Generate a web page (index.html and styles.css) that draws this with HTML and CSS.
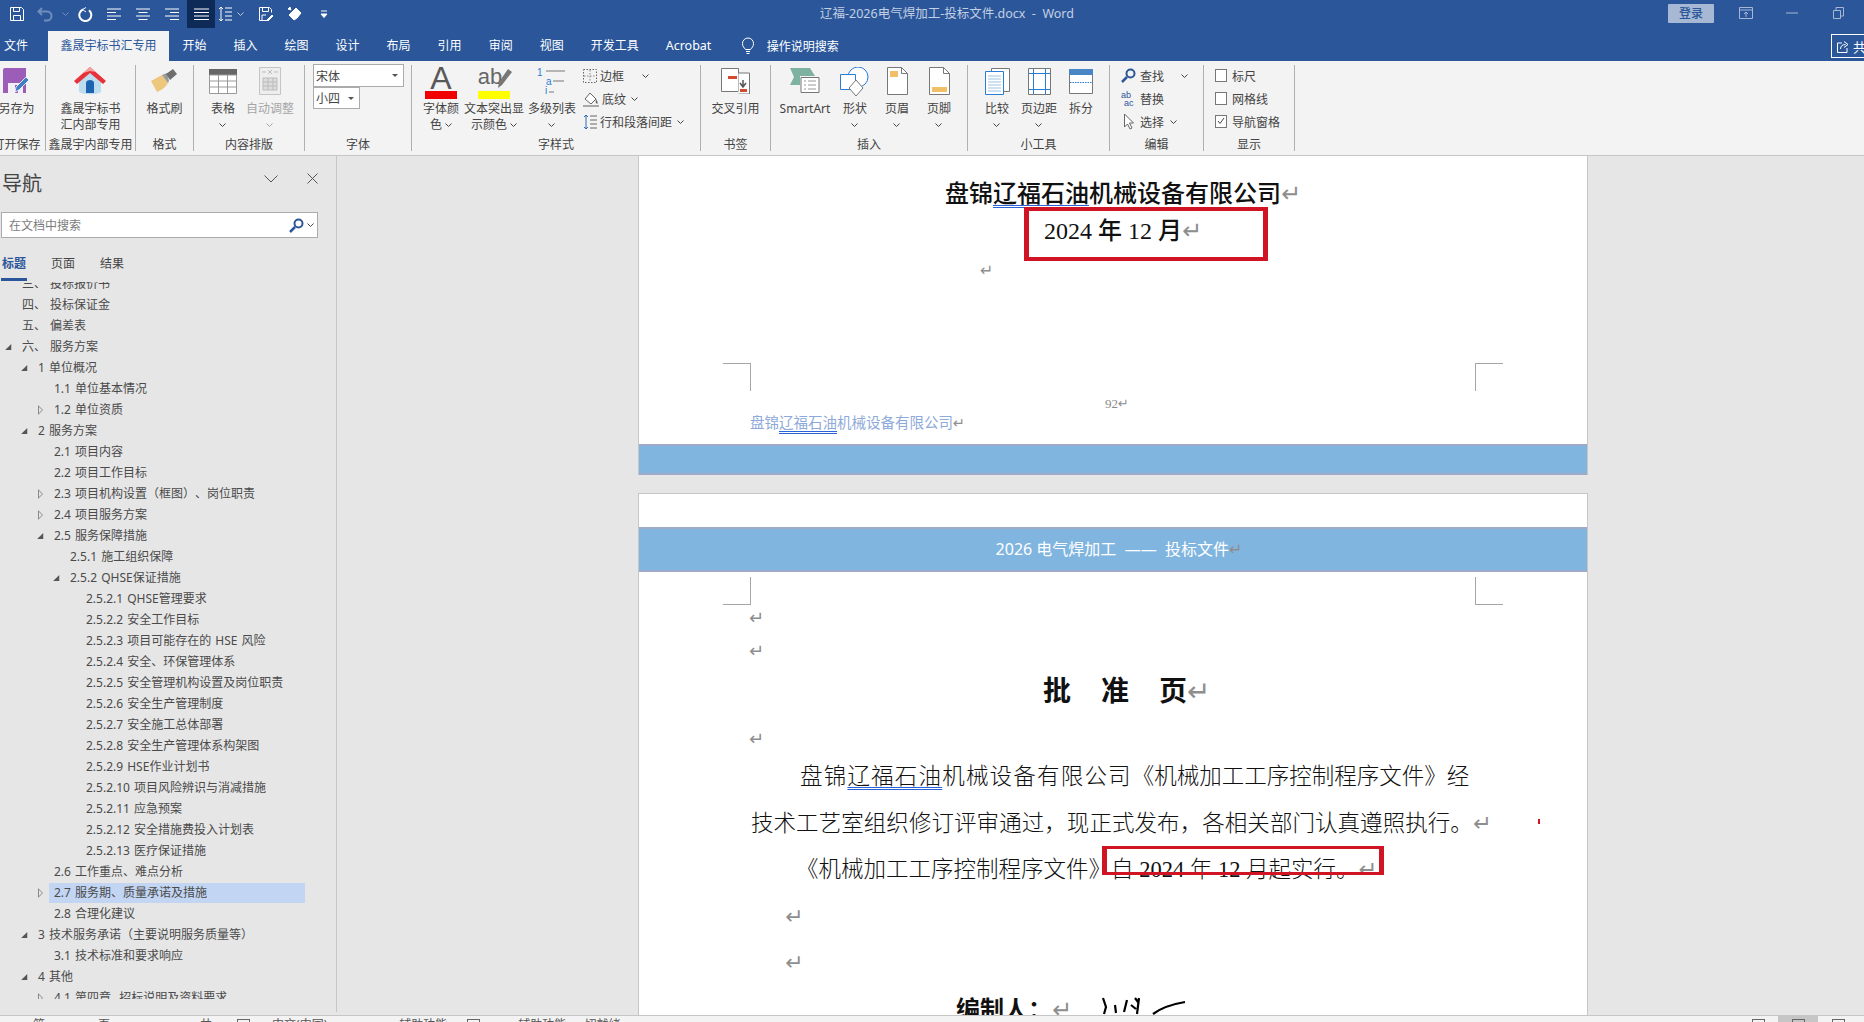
FILE: index.html
```html
<!DOCTYPE html>
<html lang="zh-CN">
<head>
<meta charset="utf-8">
<title>辽福-2026电气焊加工-投标文件.docx - Word</title>
<link rel="stylesheet" href="styles.css">
</head>
<body>
<div class="app">
  <header class="titlebar">
    <div class="qat">
      <span class="q"><svg width="16" height="16" viewBox="0 0 16 16" class="qi"><path d="M1.5 1.5h11l2 2v11h-13z"/><path d="M4.5 1.5v4h6v-4M4.5 14.5v-5h7v5"/></svg></span>
      <span class="q dim"><svg width="18" height="16" viewBox="0 0 18 16" class="qi"><path d="M5 2L1.5 5.5 5 9M2 5.5h8a4.5 4.5 0 0 1 0 9H7" stroke-width="2"/></svg></span>
      <span class="q-sm dim"><svg width="7" height="4" viewBox="0 0 7 4" class="qi"><path d="M.5.5l3 3 3-3"/></svg></span>
      <span class="q"><svg width="16" height="16" viewBox="0 0 16 16" class="qi"><path d="M9 1.5L5.5 3.5 9 6" /><path d="M6 3.5a6 6 0 1 0 6 .8" stroke-width="2"/></svg></span>
      <span class="q"><svg width="14" height="12" viewBox="0 0 14 12" class="qi"><path d="M0 1h14M0 4.500h9M0 8h14M0 11.500h9"/></svg></span>
      <span class="q"><svg width="14" height="12" viewBox="0 0 14 12" class="qi"><path d="M0 1h14M2.500 4.500h9M0 8h14M2.500 11.500h9"/></svg></span>
      <span class="q"><svg width="14" height="12" viewBox="0 0 14 12" class="qi"><path d="M0 1h14M5 4.500h9M0 8h14M5 11.500h9"/></svg></span>
      <span class="q active"><svg width="15" height="12" viewBox="0 0 15 12" class="qi"><path d="M0 1h15M0 4.500h15M0 8h15M0 11.500h15"/></svg></span>
      <span class="q-line"><svg width="14" height="16" viewBox="0 0 14 16" class="qi"><path d="M3 1v14M1 3l2-2 2 2M1 13l2 2 2-2M7 2h7M7 6h7M7 10h7M7 14h7"/></svg></span>
      <span class="q-sm2"><svg width="7" height="4" viewBox="0 0 7 4" class="qi"><path d="M.5.5l3 3 3-3" stroke="#b9c8de"/></svg></span>
      <span class="q q-gap"><svg width="16" height="16" viewBox="0 0 16 16" class="qi"><path d="M10 14.500H1.500v-13h10l2 2v3"/><path d="M4.500 1.500v4h6v-4M4 14v-5h4"/><path d="M9 14l5-5 1 1-5 5z" fill="#fff"/></svg></span>
      <span class="q"><svg width="16" height="16" viewBox="0 0 16 16" class="qi"><path d="M7 14L2 9l7-7 5 5-4 5z" fill="#fff"/><path d="M1 3l2-2 1 3z" fill="#fff"/></svg></span>
      <span class="q"><svg width="8" height="8" viewBox="0 0 8 8" class="qi"><path d="M1 1h6"/><path d="M1 4h6L4 7.500z" fill="#fff"/></svg></span>
    </div>
    <div class="doc-title">辽福-2026电气焊加工-投标文件.docx&nbsp; -&nbsp; Word</div>
    <div class="winctl">
      <span class="signin">登录</span>
      <span class="win"><svg width="14" height="12" viewBox="0 0 14 12" class="wi"><path d="M.5.500h13v11H.5zM.5 3h13M7 10V5M5 7l2-2 2 2"/></svg></span>
      <span class="win"><svg width="12" height="2" viewBox="0 0 12 2" class="wi"><path d="M0 1h12"/></svg></span>
      <span class="win"><svg width="11" height="12" viewBox="0 0 11 12" class="wi"><path d="M.5 3.500h7v8h-7zM3 3V.500h7.500V9H8"/></svg></span>
    </div>
  </header>

  <nav class="tabs">
    <span class="tab first">文件</span>
    <span class="tab active">鑫晟宇标书汇专用</span>
    <span class="tab">开始</span>
    <span class="tab">插入</span>
    <span class="tab">绘图</span>
    <span class="tab">设计</span>
    <span class="tab">布局</span>
    <span class="tab">引用</span>
    <span class="tab">审阅</span>
    <span class="tab">视图</span>
    <span class="tab">开发工具</span>
    <span class="tab latin">Acrobat</span>
    <span class="tell">
      <svg width="14" height="18" viewBox="0 0 14 18" class="wi-w"><path d="M4.500 12.500C3 10.500 1.500 9.500 1.500 6.500a5.500 5.500 0 0 1 11 0c0 3-1.500 4-3 6zM5 14.500h4M5.500 16.500h3"/></svg>
      <span>操作说明搜索</span>
    </span>
    <span class="share"><svg width="12" height="13" viewBox="0 0 12 13" class="wi-w"><path d="M5 3H.500v9.500H10V8M3.500 9c0-3 2-4.500 5-4.500M7 1.500l4 3-4 3"/></svg><span>共享</span></span>
  </nav>

  <section class="ribbon">
    <div class="grp g1">
      <div class="tools center">
        <div class="tool"><div class="ico"><svg width="26" height="26" viewBox="0 0 26 26"><path d="M0 2a2 2 0 0 1 2-2h21v25H0z" fill="#9c5db8"/><path d="M5 15h15v10H5z" fill="#f4eef8"/><path d="M12 17h3v8h-3z" fill="#9c5db8"/><path d="M12 24l1-5L23 9l3 3-10 10z" fill="#3f7fc4" stroke="#fff" stroke-width=".8"/></svg></div><div class="t">另存为</div></div>
      </div>
      <div class="lbl">打开保存</div>
    </div>
    <div class="grp g2">
      <div class="tools center">
        <div class="tool"><div class="ico"><svg width="32" height="30" viewBox="0 0 32 30"><path d="M5 14v12c4 3 18 3 22 0V14L16 4z" fill="#bcdcf0"/><path d="M12 27V17c0-4 8-4 8 0v10z" fill="#1e63b0"/><path d="M0 15L16 1l16 14-3 3L16 7 3 18z" fill="#e8323a"/><path d="M9 7l7-6 6 5-6-1z" fill="#f6a0a0"/></svg></div><div class="t">鑫晟宇标书<br>汇内部专用</div></div>
      </div>
      <div class="lbl">鑫晟宇内部专用</div>
    </div>
    <div class="grp g3">
      <div class="tools center">
        <div class="tool"><div class="ico"><svg width="26" height="24" viewBox="0 0 26 24"><path d="M0 12l6 11c5-2 9-5 11-9l-6-8z" fill="#ecc77c"/><path d="M11 6l5-2 2 8-1 2z" fill="#9a9a9a"/><path d="M15 5l7-5 4 5-7 6z" fill="#6e6e6e"/></svg></div><div class="t">格式刷</div></div>
      </div>
      <div class="lbl">格式</div>
    </div>
    <div class="grp g4">
      <div class="tools">
        <div class="tool w40"><div class="ico"><svg width="28" height="25" viewBox="0 0 28 25"><path d="M0 0h28v6H0z" fill="#666"/><path d="M.5 6h27v18.500H.5zM.5 12h27M.5 18h27M9.500 6v18M18.500 6v18" fill="#fff" stroke="#999"/></svg></div><div class="t">表格<br><svg class="chev" width="7" height="4" viewBox="0 0 7 4"><path d="M.5.500l3 3 3-3"/></svg></div></div>
        <div class="tool w54 off"><div class="ico"><svg width="22" height="28" viewBox="0 0 22 28"><path d="M.5.500h21v27H.5z" fill="#eee" stroke="#c4c4c4"/><path d="M3 5h4M15 5h4M9 3l4 4M13 3L9 7" stroke="#bbb" fill="none"/><path d="M4 11h14v12H4zM4 15h14M4 19h14M9 11v12M14 11v12" fill="#ddd" stroke="#bbb"/></svg></div><div class="t">自动调整<br><svg class="chev" width="7" height="4" viewBox="0 0 7 4"><path d="M.5.500l3 3 3-3"/></svg></div></div>
      </div>
      <div class="lbl">内容排版</div>
    </div>
    <div class="grp g5">
      <div class="tools col">
        <div class="select s-font"><span>宋体</span><i class="caret"></i></div>
        <div class="select s-size"><span>小四</span><i class="caret"></i></div>
      </div>
      <div class="lbl">字体</div>
    </div>
    <div class="grp g6">
      <div class="tools">
        <div class="tool w40"><div class="ico stack"><span class="big-a">A</span><i class="bar red"></i></div><div class="t">字体颜<br>色 <svg class="chev" width="7" height="4" viewBox="0 0 7 4"><path d="M.5.500l3 3 3-3"/></svg></div></div>
        <div class="tool w64"><div class="ico stack"><span class="big-ab">ab</span><svg class="ab-pen" width="14" height="20" viewBox="0 0 14 20"><path d="M0 20l1-6L10 1l4 3L4 17z" fill="#777"/></svg><i class="bar yellow"></i></div><div class="t">文本突出显<br>示颜色 <svg class="chev" width="7" height="4" viewBox="0 0 7 4"><path d="M.5.500l3 3 3-3"/></svg></div></div>
        <div class="tool w50"><div class="ico"><svg width="30" height="28" viewBox="0 0 30 28"><text x="0" y="9" class="ml-t">1</text><path d="M9 4h19M16 14h11M12 25h5" stroke="#777" fill="none"/><text x="9" y="18" class="ml-t">a</text><text x="8" y="27" class="ml-t">i</text></svg></div><div class="t">多级列表<br><svg class="chev" width="7" height="4" viewBox="0 0 7 4"><path d="M.5.500l3 3 3-3"/></svg></div></div>
        <div class="small-col">
          <div class="sr"><svg width="14" height="14" viewBox="0 0 14 14"><path d="M.5.500h13v13H.5z" fill="none" stroke="#666" stroke-dasharray="1.500 1.500"/><path d="M7 1v12M1 7h12" stroke="#888" stroke-dasharray="1.500 1.500"/></svg><span>边框</span><svg class="chev sr-c1" width="7" height="4" viewBox="0 0 7 4"><path d="M.5.500l3 3 3-3"/></svg></div>
          <div class="sr"><svg width="16" height="16" viewBox="0 0 16 16"><path d="M2 8l5-6 6 6-5 5z" fill="#fff" stroke="#666"/><path d="M13 8c2 3 2 4 1 5-1-1-2-2-1-5z" fill="#666"/><path d="M0 14h16v2H0z" fill="#a9a9a9"/></svg><span>底纹</span><svg class="chev" width="7" height="4" viewBox="0 0 7 4"><path d="M.5.500l3 3 3-3"/></svg></div>
          <div class="sr"><svg width="14" height="16" viewBox="0 0 14 16"><path d="M3 1v14M1 3l2-2 2 2M1 13l2 2 2-2" fill="none" stroke="#2b6cb0"/><path d="M7 2h7M7 6h7M7 10h7M7 14h7" stroke="#666"/></svg><span>行和段落间距</span><svg class="chev" width="7" height="4" viewBox="0 0 7 4"><path d="M.5.500l3 3 3-3"/></svg></div>
        </div>
      </div>
      <div class="lbl">字样式</div>
    </div>
    <div class="grp g7">
      <div class="tools center">
        <div class="tool"><div class="ico"><svg width="29" height="26" viewBox="0 0 29 26"><path d="M.5.500h17v23H.5z" fill="#fff" stroke="#777"/><path d="M17.500 5h11v21h-11" fill="#fff" stroke="#777"/><path d="M7 8h9v3H7z" fill="#d24b2e"/><path d="M19 21h7v3h-7z" fill="#d24b2e"/><path d="M22 12v6M19 15l3 4 3-4" fill="none" stroke="#555" stroke-width="1.500"/></svg></div><div class="t">交叉引用</div></div>
      </div>
      <div class="lbl">书签</div>
    </div>
    <div class="grp g8">
      <div class="tools">
        <div class="tool w54"><div class="ico"><svg width="30" height="26" viewBox="0 0 30 26"><path d="M0 0h20l5 8h-15v9H0l4-8z" fill="#7fb1a0"/><path d="M11 9.500h18v15H11z" fill="#fff" stroke="#777"/><path d="M14 13h2M18 13h8M14 17h2M18 17h8M14 21h2M18 21h8" stroke="#999"/></svg></div><div class="t latin">SmartArt</div></div>
        <div class="tool w42 mg2"><div class="ico"><svg width="30" height="29" viewBox="0 0 30 29"><circle cx="18" cy="10" r="10" fill="#fff" stroke="#2b7cd3"/><path d="M.5 7.500h15v15H.5z" fill="#fff" stroke="#2b7cd3"/><path d="M16 13l7 8-7 8-7-8z" fill="#fff" stroke="#777"/></svg></div><div class="t">形状<br><svg class="chev" width="7" height="4" viewBox="0 0 7 4"><path d="M.5.500l3 3 3-3"/></svg></div></div>
        <div class="tool w42"><div class="ico"><svg width="21" height="28" viewBox="0 0 21 28"><path d="M.5.500h14l6 6v21H.5z" fill="#fff" stroke="#777"/><path d="M14.500.500v6h6" fill="none" stroke="#777"/><path d="M3 4h8v6H3z" fill="#f0bf68"/></svg></div><div class="t">页眉<br><svg class="chev" width="7" height="4" viewBox="0 0 7 4"><path d="M.5.500l3 3 3-3"/></svg></div></div>
        <div class="tool w42"><div class="ico"><svg width="21" height="28" viewBox="0 0 21 28"><path d="M.5.500h14l6 6v21H.5z" fill="#fff" stroke="#777"/><path d="M14.500.500v6h6" fill="none" stroke="#777"/><path d="M3 20h15v5H3z" fill="#f0bf68"/></svg></div><div class="t">页脚<br><svg class="chev" width="7" height="4" viewBox="0 0 7 4"><path d="M.5.500l3 3 3-3"/></svg></div></div>
      </div>
      <div class="lbl">插入</div>
    </div>
    <div class="grp g9">
      <div class="tools">
        <div class="tool w40"><div class="ico"><svg width="25" height="27" viewBox="0 0 25 27"><path d="M6.500.500h18v23h-18z" fill="#fff" stroke="#777"/><path d="M.5 3.500h18v23H.5z" fill="#fff" stroke="#2b7cd3"/><path d="M3 8h13M3 11h13M3 14h13M3 17h13M3 20h13M3 23h13" stroke="#9cc3e6"/></svg></div><div class="t">比较<br><svg class="chev" width="7" height="4" viewBox="0 0 7 4"><path d="M.5.500l3 3 3-3"/></svg></div></div>
        <div class="tool w40"><div class="ico"><svg width="23" height="27" viewBox="0 0 23 27"><path d="M.5.500h22v26H.5z" fill="#fff" stroke="#777"/><path d="M5.500 1v25M17.500 1v25M1 5.500h21M1 21.500h21" stroke="#2b7cd3"/></svg></div><div class="t">页边距<br><svg class="chev" width="7" height="4" viewBox="0 0 7 4"><path d="M.5.500l3 3 3-3"/></svg></div></div>
        <div class="tool w40"><div class="ico"><svg width="24" height="25" viewBox="0 0 24 25"><path d="M.5.500h23v24H.5z" fill="#fff" stroke="#777"/><path d="M0 0h24v6H0z" fill="#4a86c5"/><path d="M1 13.500h22" stroke="#2b7cd3" stroke-dasharray="1.500 1"/></svg></div><div class="t">拆分</div></div>
      </div>
      <div class="lbl">小工具</div>
    </div>
    <div class="grp g10">
      <div class="tools col">
        <div class="sr edit"><svg width="15" height="15" viewBox="0 0 15 15"><circle cx="9.500" cy="5.500" r="4" fill="none" stroke="#2b579a" stroke-width="2"/><path d="M6 9l-5 5" stroke="#2b579a" stroke-width="2.500"/></svg><span>查找</span><svg class="chev sr-c2" width="7" height="4" viewBox="0 0 7 4"><path d="M.5.500l3 3 3-3"/></svg></div>
        <div class="sr edit"><svg width="15" height="17" viewBox="0 0 15 17"><text x="0" y="8" class="rep">ab</text><text x="3" y="16" class="rep">ac</text></svg><span>替换</span></div>
        <div class="sr edit"><svg width="15" height="17" viewBox="0 0 15 17"><path d="M3.500 1v13l3-3 2.500 5 2-1-2.500-5h4z" fill="#fff" stroke="#666"/></svg><span>选择</span><svg class="chev" width="7" height="4" viewBox="0 0 7 4"><path d="M.5.500l3 3 3-3"/></svg></div>
      </div>
      <div class="lbl">编辑</div>
    </div>
    <div class="grp g11">
      <div class="tools col">
        <label class="sr chk"><i class="cb"></i><span>标尺</span></label>
        <label class="sr chk"><i class="cb"></i><span>网格线</span></label>
        <label class="sr chk"><i class="cb"><svg width="10" height="10" viewBox="0 0 10 10"><path d="M2 5l2 2.500L8 2" fill="none" stroke="#444"/></svg></i><span>导航窗格</span></label>
      </div>
      <div class="lbl">显示</div>
    </div>
  </section>

  <main class="main">
    <aside class="nav">
      <div class="nav-head">
        <div class="nav-title">导航</div>
        <svg class="nav-chev" width="14" height="8" viewBox="0 0 14 8"><path d="M.5.500L7 7 13.500.500" fill="none" stroke="#555"/></svg>
        <svg class="nav-x" width="11" height="11" viewBox="0 0 11 11"><path d="M.5.500l10 10M10.500.500l-10 10" fill="none" stroke="#555"/></svg>
      </div>
      <div class="search"><span>在文档中搜索</span><svg width="15" height="15" viewBox="0 0 15 15"><circle cx="9.500" cy="5.500" r="4" fill="none" stroke="#2b579a" stroke-width="2"/><path d="M6 9l-5 5" stroke="#2b579a" stroke-width="2.500"/></svg><svg class="chev" width="7" height="4" viewBox="0 0 7 4"><path d="M.5.500l3 3 3-3"/></svg></div>
      <div class="nav-tabs"><span class="nt on">标题</span><span class="nt">页面</span><span class="nt">结果</span></div>
      <div class="tree">
        <div class="row l0 first-row"><i class="nc"></i><span class="rl">三、 投标报价书</span></div>
        <div class="row l0"><i class="nc"></i><span class="rl">四、 投标保证金</span></div>
        <div class="row l0"><i class="nc"></i><span class="rl">五、 偏差表</span></div>
        <div class="row l0"><i class="nc open"></i><span class="rl">六、 服务方案</span></div>
        <div class="row l1"><i class="nc open"></i><span class="rl">1 单位概况</span></div>
        <div class="row l2"><i class="nc"></i><span class="rl">1.1 单位基本情况</span></div>
        <div class="row l2"><i class="nc shut"></i><span class="rl">1.2 单位资质</span></div>
        <div class="row l1"><i class="nc open"></i><span class="rl">2 服务方案</span></div>
        <div class="row l2"><i class="nc"></i><span class="rl">2.1 项目内容</span></div>
        <div class="row l2"><i class="nc"></i><span class="rl">2.2 项目工作目标</span></div>
        <div class="row l2"><i class="nc shut"></i><span class="rl">2.3 项目机构设置（框图）、岗位职责</span></div>
        <div class="row l2"><i class="nc shut"></i><span class="rl">2.4 项目服务方案</span></div>
        <div class="row l2"><i class="nc open"></i><span class="rl">2.5 服务保障措施</span></div>
        <div class="row l3"><i class="nc"></i><span class="rl">2.5.1 施工组织保障</span></div>
        <div class="row l3"><i class="nc open"></i><span class="rl">2.5.2 QHSE保证措施</span></div>
        <div class="row l4"><i class="nc"></i><span class="rl">2.5.2.1 QHSE管理要求</span></div>
        <div class="row l4"><i class="nc"></i><span class="rl">2.5.2.2 安全工作目标</span></div>
        <div class="row l4"><i class="nc"></i><span class="rl">2.5.2.3 项目可能存在的 HSE 风险</span></div>
        <div class="row l4"><i class="nc"></i><span class="rl">2.5.2.4 安全、环保管理体系</span></div>
        <div class="row l4"><i class="nc"></i><span class="rl">2.5.2.5 安全管理机构设置及岗位职责</span></div>
        <div class="row l4"><i class="nc"></i><span class="rl">2.5.2.6 安全生产管理制度</span></div>
        <div class="row l4"><i class="nc"></i><span class="rl">2.5.2.7 安全施工总体部署</span></div>
        <div class="row l4"><i class="nc"></i><span class="rl">2.5.2.8 安全生产管理体系构架图</span></div>
        <div class="row l4"><i class="nc"></i><span class="rl">2.5.2.9 HSE作业计划书</span></div>
        <div class="row l4"><i class="nc"></i><span class="rl">2.5.2.10 项目风险辨识与消减措施</span></div>
        <div class="row l4"><i class="nc"></i><span class="rl">2.5.2.11 应急预案</span></div>
        <div class="row l4"><i class="nc"></i><span class="rl">2.5.2.12 安全措施费投入计划表</span></div>
        <div class="row l4"><i class="nc"></i><span class="rl">2.5.2.13 医疗保证措施</span></div>
        <div class="row l2"><i class="nc"></i><span class="rl">2.6 工作重点、难点分析</span></div>
        <div class="row l2 sel"><i class="nc shut"></i><span class="rl">2.7 服务期、质量承诺及措施</span></div>
        <div class="row l2"><i class="nc"></i><span class="rl">2.8 合理化建议</span></div>
        <div class="row l1"><i class="nc open"></i><span class="rl">3 技术服务承诺（主要说明服务质量等）</span></div>
        <div class="row l2"><i class="nc"></i><span class="rl">3.1 技术标准和要求响应</span></div>
        <div class="row l1"><i class="nc open"></i><span class="rl">4 其他</span></div>
        <div class="row l2"><i class="nc shut"></i><span class="rl">4.1 第四章&nbsp; 招标说明及资料要求</span></div>
      </div>
    </aside>

    <div class="doc">
      <article class="page p1">
        <div class="d-head">盘锦<u class="squig">辽福石油</u>机械设备有限公司<span class="rm">↵</span></div>
        <div class="d-date">2024 年 12 月<span class="rm">↵</span></div>
        <div class="d-mark1"><span class="rm">↵</span></div>
        <div class="crop-row"><i class="crop tl"></i><i class="crop tr"></i></div>
        <div class="d-num">92<span class="rm">↵</span></div>
        <div class="d-co">盘锦<u class="squig">辽福石油</u>机械设备有限公司<span class="rm">↵</span></div>
        <div class="band"></div>
        <i class="redbox rb1"></i>
      </article>
      <article class="page p2">
        <div class="band hd">2026 电气焊加工&nbsp; ——&nbsp; 投标文件<span class="rm">↵</span></div>
        <div class="crop-row"><i class="crop bl"></i><i class="crop br"></i></div>
        <div class="mk mk1"><span class="rm">↵</span></div>
        <div class="mk mk2"><span class="rm">↵</span></div>
        <div class="d-title">批<span class="sp"></span>准<span class="sp"></span>页<span class="rm">↵</span></div>
        <div class="mk mk3"><span class="rm">↵</span></div>
        <p class="ln ln1"><span class="wide">盘锦<u class="squig">辽福石油</u>机械设备有限公司</span>《机械加工工序控制程序文件》经</p>
        <p class="ln ln2">技术工艺室组织修订评审通过，现正式发布，各相关部门认真遵照执行。<span class="rm">↵</span></p>
        <p class="ln ln3">《机械加工工序控制程序文件》自 2024 年 12 月起实行。<span class="rm">↵</span></p>
        <div class="mk mk4"><span class="rm big">↵</span></div>
        <div class="mk mk5"><span class="rm big">↵</span></div>
        <div class="sign"><span class="sign-l">编制人：<span class="rm">↵</span></span><svg width="90" height="20" viewBox="0 0 90 20"><path d="M2 2l3 9-2 7M14 9l1 8M26 4l-3 12M34 2l3 4M30 9l5 4M38 2l-2 16M52 18c8-6 20-10 32-12" fill="none" stroke="#000" stroke-width="2.200"/></svg></div>
        <i class="redbox rb2"></i>
        <i class="tick"></i>
      </article>
    </div>
  </main>

  <footer class="status">
    <span class="st st-a">第</span><span class="st st-b">页</span><span class="st st-c">共</span>
    <i class="st-box"></i><span class="st st-d">中文(中国)</span><span class="st st-e">辅助功能</span><i class="st-box st-f"></i><span class="st st-g">辅助功能: 一切就绪</span>
    <span class="views"><span class="vb"><i class="vi"></i></span><span class="vb on"><i class="vi"></i></span><span class="vb"><i class="vi"></i></span></span>
  </footer>
</div>
</body>
</html>
```

FILE: styles.css
```css
* { box-sizing: border-box; }
html, body { margin: 0; height: 100%; overflow: hidden; }
body { font-family: "Noto Sans", "Noto Sans CJK SC", sans-serif; font-size: 12px; color: #444; text-spacing-trim: space-all; }
i { display: block; font-style: normal; }
svg { display: block; flex: none; }
.app { display: flex; flex-direction: column; height: 1022px; width: 1864px; overflow: hidden; }

/* title bar */
.titlebar { height: 31px; background: #2b579a; display: flex; align-items: flex-start; }
.qat { display: flex; width: 338px; height: 28px; padding-left: 2px; }
.q { width: 29px; height: 28px; display: flex; align-items: center; justify-content: center; flex: none; }
.q.active { background: #0e2a56; width: 28px; margin-left: 1px; }
.q-sm { width: 11px; height: 28px; display: flex; align-items: center; justify-content: center; margin-right: 0; }
.q-line { width: 20px; height: 28px; display: flex; align-items: center; justify-content: center; }
.q-sm2 { width: 14px; height: 28px; display: flex; align-items: center; justify-content: center; margin-right: 4px; }
.qi { fill: none; stroke: #fff; stroke-width: 1; }
.dim .qi { stroke: #6f8dbb; }
.doc-title { margin-left: 482px; color: #c3cfe2; line-height: 28px; font-size: 12.500px; white-space: nowrap; }
.winctl { margin-left: auto; display: flex; align-items: flex-start; padding: 4px 3px 0 0; }
.signin { width: 46px; height: 19px; background: #a6b8d3; color: #2b579a; text-align: center; line-height: 20px; border-radius: 1px; margin-right: 9px; font-weight: 500; }
.win { width: 46px; height: 17px; display: flex; align-items: center; justify-content: center; }
.wi { fill: none; stroke: #a6b8d3; }
.wi-w { fill: none; stroke: #fff; }

/* tabs */
.tabs { height: 30px; background: #2b579a; display: flex; color: #fff; position: relative; }
.tab { padding: 0 13.500px; line-height: 30px; white-space: nowrap; flex: none; }
.tab.first { margin-left: -9.500px; margin-right: 6.500px; }
.tab.active { background: #f3f3f3; color: #2b579a; padding: 0 12.500px; }
.tab.latin { font-size: 12.500px; }
.tell { display: flex; align-items: center; gap: 12px; margin-left: 3px; }
.tell svg { margin-left: 13px; }
.share { margin-left: auto; margin-right: -8px; margin-top: 3px; width: 41px; height: 24px; border: 1px solid #fff; display: flex; align-items: center; gap: 4px; padding-left: 5px; font-size: 13px; flex: none; overflow: hidden; white-space: nowrap; }

/* ribbon */
.ribbon { height: 95px; background: #f3f3f3; border-bottom: 1px solid #c6c6c6; display: flex; padding: 4px 0; flex: none; }
.grp { height: 86px; border-right: 1px solid #b0b0b0; display: flex; flex-direction: column; flex: none; }
.g1 { width: 58px; margin-left: -12px; }
.g2 { width: 90px; }
.g3 { width: 58px; }
.g4 { width: 111px; }
.g5 { width: 107px; }
.g6 { width: 289px; }
.g7 { width: 70px; }
.g8 { width: 197px; }
.g9 { width: 142px; }
.g10 { width: 94px; }
.g11 { width: 91px; }
.tools { flex: 1; display: flex; min-height: 0; }
.tools.center { justify-content: center; }
.tools.col { flex-direction: column; }
.g4 .tools { padding-left: 9px; }
.g5 .tools { padding-left: 8px; margin-top: -1px; }
.g6 .tools { padding-left: 9px; gap: 1px; }
.g8 .tools { padding-left: 7px; }
.g9 .tools { padding-left: 9px; gap: 2px; }
.g10 .tools { padding-left: 11px; margin-top: -1px; }
.g11 .tools { padding-left: 11px; margin-top: -1px; }
.lbl { height: 16px; line-height: 20px; text-align: center; white-space: nowrap; flex: none; }
.tool { display: flex; flex-direction: column; align-items: center; flex: none; }
.w40 { width: 40px; } .w42 { width: 42px; } .w50 { width: 50px; } .w54 { width: 54px; } .w64 { width: 64px; }
.mg2 { margin-left: 2px; }
.ico { height: 36px; display: flex; align-items: center; justify-content: center; padding-bottom: 4px; }
.t { line-height: 15.500px; text-align: center; white-space: nowrap; }
.off .t { color: #a6a6a6; }
.off .chev path { stroke: #a6a6a6; }
.chev { display: inline-block; vertical-align: middle; fill: none; stroke: #444; }
.t .chev { margin-top: -1px; }
.latin { font-family: "Noto Sans", sans-serif; }
.select { background: #fff; border: 1px solid #ababab; display: flex; align-items: center; justify-content: space-between; padding: 0 5px 0 2px; flex: none; }
.s-font { width: 91px; height: 23px; }
.s-size { width: 47px; height: 22px; margin-top: 0; }
.caret { width: 0; height: 0; border-left: 3px solid transparent; border-right: 3px solid transparent; border-top: 3px solid #555; }
.stack { position: relative; width: 34px; flex-direction: column; justify-content: flex-start; padding: 0; }
.big-a { font-size: 32px; line-height: 26px; height: 26px; color: #595959; font-family: "Liberation Sans", sans-serif; }
.big-ab { font-size: 22px; line-height: 24px; height: 26px; color: #666; font-family: "Liberation Sans", sans-serif; margin-left: -8px; }
.ab-pen { position: absolute; right: -1px; top: 3px; }
.bar { width: 32px; height: 8px; flex: none; }
.red { background: #f00000; }
.yellow { background: #ffff00; }
.ml-t { font: 10px "Liberation Sans", sans-serif; fill: #2b7cd3; }
.small-col { display: flex; flex-direction: column; margin-left: 5px; margin-top: -1px; }
.sr { height: 23px; display: flex; align-items: center; gap: 2px; white-space: nowrap; flex: none; }
.sr > span { margin-left: 1px; margin-right: 3px; }
.sr-c1 { margin-left: 13px; }
.edit { gap: 3px; }
.sr-c2 { margin-left: 11px; }
.rep { font: 9px "Liberation Sans", sans-serif; fill: #2b579a; }
.chk { gap: 4px; }
.cb { width: 12px; height: 13px; border: 1px solid #777; background: #fff; flex: none; }

/* main */
.main { flex: 1; min-height: 0; display: flex; align-items: flex-start; background: #e6e6e6; }
.nav { width: 337px; height: 856px; border-right: 1px solid #c6c6c6; flex: none; display: flex; flex-direction: column; }
.nav-head { display: flex; align-items: flex-start; height: 42px; padding: 13px 0 0 2px; flex: none; }
.nav-title { font-size: 20px; line-height: 30px; width: 262px; color: #444; }
.nav-chev { margin-top: 6px; }
.nav-x { margin-left: 29px; margin-top: 4px; }
.search { margin: 14px 0 0 1px; width: 317px; height: 26px; border: 1px solid #ababab; background: #fff; display: flex; align-items: center; padding: 0 3px 0 7px; flex: none; }
.search span { flex: 1; color: #7b7b7b; }
.search .chev { margin-left: 3px; }
.nav-tabs { display: flex; gap: 23px; margin: 15px 0 0 1px; height: 28px; flex: none; }
.nt { height: 28px; line-height: 22px; padding: 0 1px; }
.nt.on { color: #2b579a; font-weight: 700; border-bottom: 3px solid #2b579a; }
.tree { margin-top: 1px; height: 717px; overflow: hidden; flex: none; color: #4a4a4a; }
.row { height: 21px; display: flex; align-items: center; white-space: nowrap; }
.first-row { margin-top: -9px; }
.l0 { padding-left: 3px; } .l1 { padding-left: 19px; } .l2 { padding-left: 35px; } .l3 { padding-left: 51px; } .l4 { padding-left: 67px; }
.nc { width: 11px; height: 12px; margin-right: 3px; flex: none; }
.nc.open { background: #555; clip-path: polygon(75% 30%, 75% 80%, 20% 80%); }
.nc.shut { width: 0; height: 0; border-top: 5px solid transparent; border-bottom: 5px solid transparent; position: relative; border-left: 5px solid #8a8a8a; margin-left: 3px; margin-right: 6px; }
.nc.shut::after { content: ""; position: absolute; left: -4px; top: -3px; width: 0; height: 0; border-top: 3px solid transparent; border-bottom: 3px solid transparent; border-left: 3px solid #e6e6e6; }
.rl { padding-left: 5px; height: 20px; line-height: 20px; word-spacing: 1px; }
.sel .rl { width: 256px; background: #c2d5f2; }

/* doc */
.doc { flex: 1; height: 100%; padding-left: 301px; overflow: hidden; display: flex; flex-direction: column; gap: 18px; font-family: "Liberation Serif", "Noto Sans CJK SC", serif; color: #111; }
.page { width: 950px; background: #fff; border-left: 1px solid #c6c6c6; border-right: 1px solid #c6c6c6; position: relative; flex: none; display: flex; flex-direction: column; }
.rm { font-family: "DejaVu Sans", sans-serif; color: #8e8e8e; font-weight: 400; font-size: 1em; line-height: 1; }
.squig { text-decoration: underline double #2a62d8; text-decoration-thickness: 1px; text-underline-offset: 3px; }
.d-head { font-size: 24px; height: 37px; line-height: 37px; margin-top: 20px; text-align: center; font-weight: 500; padding-left: 20px; flex: none; }
.d-date { font-size: 24px; height: 36px; line-height: 36px; padding-left: 405px; font-weight: 500; white-space: nowrap; flex: none; }
.d-mark1 { margin-top: 12px; height: 20px; line-height: 20px; padding-left: 341px; font-size: 16px; flex: none; }
.crop-row { display: flex; justify-content: space-between; padding: 0 84px; flex: none; }
.p1 .crop-row { margin-top: 82px; }
.crop { width: 28px; height: 28px; border: 0 solid #a6a6a6; }
.tl { border-top-width: 1px; border-right-width: 1px; }
.tr { border-top-width: 1px; border-left-width: 1px; }
.bl { border-bottom-width: 1px; border-right-width: 1px; }
.br { border-bottom-width: 1px; border-left-width: 1px; }
.d-num { margin-top: 5px; height: 16px; line-height: 16px; padding-left: 466px; color: #8a8a8a; font-size: 13px; flex: none; }
.d-co { height: 20px; line-height: 20px; padding-left: 111px; font-size: 14.500px; color: #8eaadb; font-family: "Noto Sans CJK SC", sans-serif; flex: none; }
.band { margin-top: 12px; height: 31px; background: #80b5df; border-top: 2px solid #9fa9c8; border-bottom: 2px solid #9fa9c8; flex: none; }
.band.hd { margin-top: 33px; height: 45px; color: #fff; font-size: 16px; line-height: 41px; text-align: center; font-family: "Noto Sans", "Noto Sans CJK SC", sans-serif; padding-left: 12px; }
.redbox { position: absolute; border: 4px solid #d01424; }
.rb1 { left: 385px; top: 51px; width: 244px; height: 54px; border-width: 4px 5px; }
.rb2 { left: 463px; top: 352px; width: 282px; height: 29px; border-width: 3px 5px; }
.tick { position: absolute; left: 899px; top: 325px; width: 2px; height: 5px; background: #d01424; }
.p2 { border-top: 1px solid #c6c6c6; height: 560px; }
.p2 .crop-row { margin-top: 5px; }
.mk { height: 20px; line-height: 20px; padding-left: 110px; font-size: 18px; flex: none; }
.mk1 { margin-top: 3px; }
.mk2 { margin-top: 13px; }
.mk3 { margin-top: 20px; }
.mk4 { margin-top: 12.500px; padding-left: 146px; }
.mk5 { margin-top: 26px; padding-left: 146px; }
.rm.big { font-size: 22px; }
.d-title { margin-top: 8px; height: 40px; line-height: 40px; font-size: 28px; font-weight: 700; padding-left: 404px; white-space: nowrap; font-family: "Noto Sans CJK SC", sans-serif; flex: none; }
.sp { display: inline-block; width: 30px; }
.ln { margin: 0; height: 46.500px; line-height: 46.500px; font-size: 22.500px; white-space: nowrap; font-family: "Liberation Serif", "Noto Sans CJK SC", serif; font-weight: 300; flex: none; }
.ln1 { margin-top: 5px; padding-left: 161px; }
.ln2 { padding-left: 112px; letter-spacing: .06px; }
.ln3 { padding-left: 157px; }
.wide { letter-spacing: 1.200px; }
.sign { margin-top: 16px; height: 40px; display: flex; align-items: flex-start; padding-left: 317px; flex: none; }
.sign-l { font-size: 24px; line-height: 40px; font-weight: 700; width: 145px; font-family: "Noto Sans CJK SC", sans-serif; }
.sign svg { margin-top: 8px; }

/* status */
.status { height: 7px; background: #f3f3f3; border-top: 1px solid #c6c6c6; display: flex; align-items: flex-start; flex: none; overflow: hidden; padding-top: 1px; position: relative; color: #555; }
.st { line-height: 15px; white-space: nowrap; flex: none; }
.st-a { margin-left: 33px; }
.st-b { margin-left: 53px; }
.st-c { margin-left: 90px; }
.st-box { width: 13px; height: 12px; border: 1px solid #666; margin: 2px 0 0 25px; flex: none; }
.st-box.st-f { margin-left: 20px; }
.st-d { margin-left: 22px; }
.st-e { margin-left: 72px; }
.st-g { margin-left: 38px; }
.views { position: absolute; right: 6px; top: 0; display: flex; }
.vb { width: 40px; height: 7px; display: flex; justify-content: center; padding-top: 3px; }
.vb.on { background: #c6c6c6; }
.vi { width: 13px; height: 12px; border: 1px solid #666; }
```
